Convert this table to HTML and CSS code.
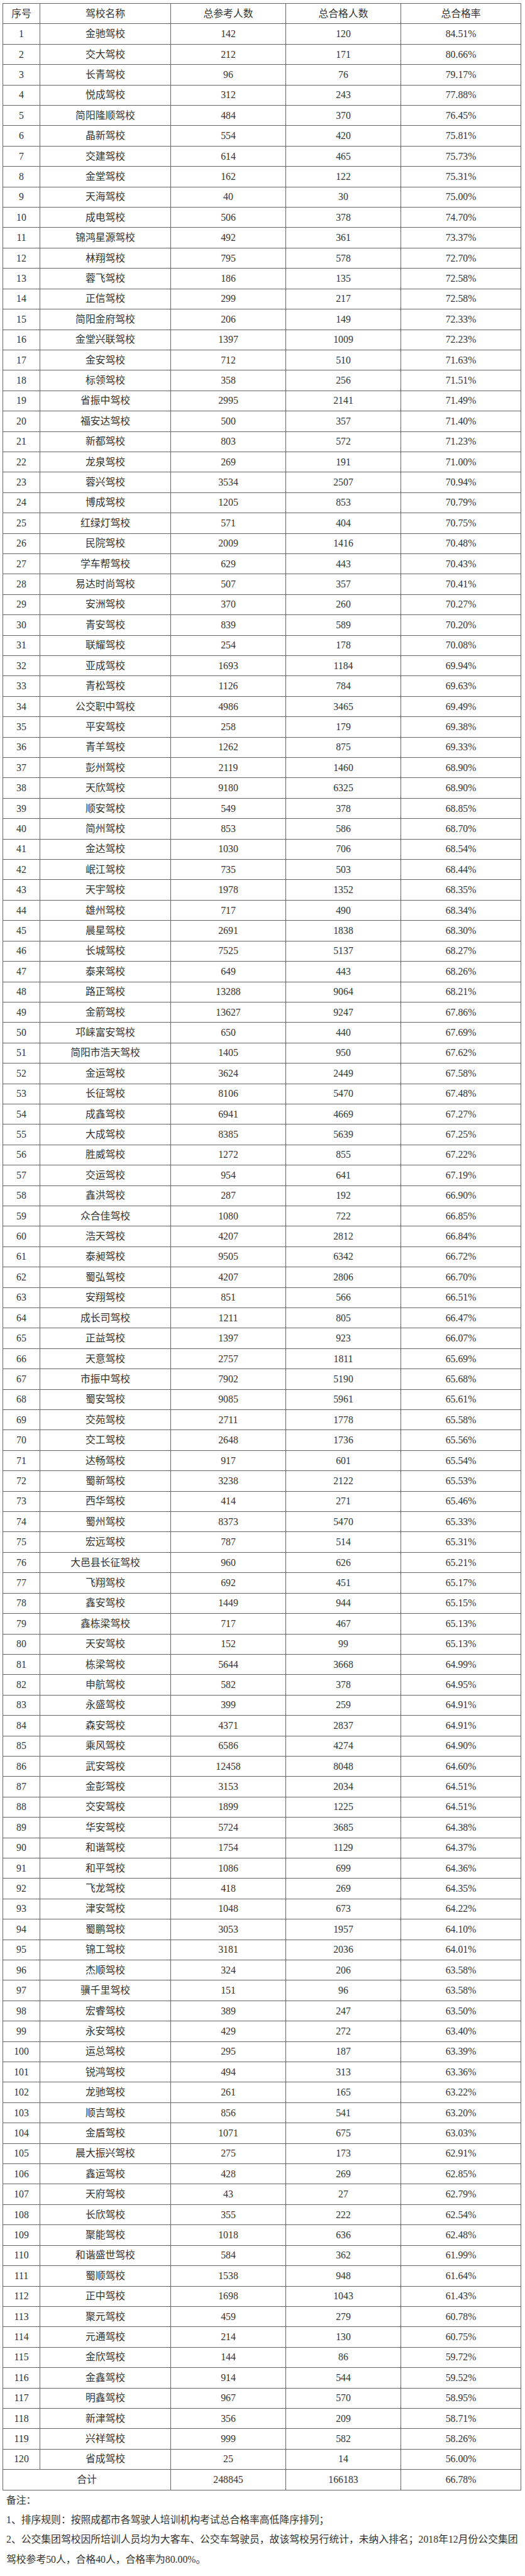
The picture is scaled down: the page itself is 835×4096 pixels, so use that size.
FILE: index.html
```html
<!DOCTYPE html>
<html lang="zh-CN">
<head>
<meta charset="utf-8">
<title>驾校考试合格率排名</title>
<link rel="stylesheet" href="styles.css">
</head>
<body>
<table class="rank">
<colgroup><col class="c-no"><col class="c-name"><col class="c-num"><col class="c-num"><col class="c-rate"></colgroup>
<thead>
<tr><th>序号</th><th>驾校名称</th><th>总参考人数</th><th>总合格人数</th><th>总合格率</th></tr>
</thead>
<tbody>
<tr><td>1</td><td>金驰驾校</td><td>142</td><td>120</td><td>84.51%</td></tr>
<tr><td>2</td><td>交大驾校</td><td>212</td><td>171</td><td>80.66%</td></tr>
<tr><td>3</td><td>长青驾校</td><td>96</td><td>76</td><td>79.17%</td></tr>
<tr><td>4</td><td>悦成驾校</td><td>312</td><td>243</td><td>77.88%</td></tr>
<tr><td>5</td><td>简阳隆顺驾校</td><td>484</td><td>370</td><td>76.45%</td></tr>
<tr><td>6</td><td>晶新驾校</td><td>554</td><td>420</td><td>75.81%</td></tr>
<tr><td>7</td><td>交建驾校</td><td>614</td><td>465</td><td>75.73%</td></tr>
<tr><td>8</td><td>金堂驾校</td><td>162</td><td>122</td><td>75.31%</td></tr>
<tr><td>9</td><td>天海驾校</td><td>40</td><td>30</td><td>75.00%</td></tr>
<tr><td>10</td><td>成电驾校</td><td>506</td><td>378</td><td>74.70%</td></tr>
<tr><td>11</td><td>锦鸿星源驾校</td><td>492</td><td>361</td><td>73.37%</td></tr>
<tr><td>12</td><td>林翔驾校</td><td>795</td><td>578</td><td>72.70%</td></tr>
<tr><td>13</td><td>蓉飞驾校</td><td>186</td><td>135</td><td>72.58%</td></tr>
<tr><td>14</td><td>正信驾校</td><td>299</td><td>217</td><td>72.58%</td></tr>
<tr><td>15</td><td>简阳金府驾校</td><td>206</td><td>149</td><td>72.33%</td></tr>
<tr><td>16</td><td>金堂兴联驾校</td><td>1397</td><td>1009</td><td>72.23%</td></tr>
<tr><td>17</td><td>金安驾校</td><td>712</td><td>510</td><td>71.63%</td></tr>
<tr><td>18</td><td>标领驾校</td><td>358</td><td>256</td><td>71.51%</td></tr>
<tr><td>19</td><td>省振中驾校</td><td>2995</td><td>2141</td><td>71.49%</td></tr>
<tr><td>20</td><td>福安达驾校</td><td>500</td><td>357</td><td>71.40%</td></tr>
<tr><td>21</td><td>新都驾校</td><td>803</td><td>572</td><td>71.23%</td></tr>
<tr><td>22</td><td>龙泉驾校</td><td>269</td><td>191</td><td>71.00%</td></tr>
<tr><td>23</td><td>蓉兴驾校</td><td>3534</td><td>2507</td><td>70.94%</td></tr>
<tr><td>24</td><td>博成驾校</td><td>1205</td><td>853</td><td>70.79%</td></tr>
<tr><td>25</td><td>红绿灯驾校</td><td>571</td><td>404</td><td>70.75%</td></tr>
<tr><td>26</td><td>民院驾校</td><td>2009</td><td>1416</td><td>70.48%</td></tr>
<tr><td>27</td><td>学车帮驾校</td><td>629</td><td>443</td><td>70.43%</td></tr>
<tr><td>28</td><td>易达时尚驾校</td><td>507</td><td>357</td><td>70.41%</td></tr>
<tr><td>29</td><td>安洲驾校</td><td>370</td><td>260</td><td>70.27%</td></tr>
<tr><td>30</td><td>青安驾校</td><td>839</td><td>589</td><td>70.20%</td></tr>
<tr><td>31</td><td>联耀驾校</td><td>254</td><td>178</td><td>70.08%</td></tr>
<tr><td>32</td><td>亚成驾校</td><td>1693</td><td>1184</td><td>69.94%</td></tr>
<tr><td>33</td><td>青松驾校</td><td>1126</td><td>784</td><td>69.63%</td></tr>
<tr><td>34</td><td>公交职中驾校</td><td>4986</td><td>3465</td><td>69.49%</td></tr>
<tr><td>35</td><td>平安驾校</td><td>258</td><td>179</td><td>69.38%</td></tr>
<tr><td>36</td><td>青羊驾校</td><td>1262</td><td>875</td><td>69.33%</td></tr>
<tr><td>37</td><td>彭州驾校</td><td>2119</td><td>1460</td><td>68.90%</td></tr>
<tr><td>38</td><td>天欣驾校</td><td>9180</td><td>6325</td><td>68.90%</td></tr>
<tr><td>39</td><td>顺安驾校</td><td>549</td><td>378</td><td>68.85%</td></tr>
<tr><td>40</td><td>简州驾校</td><td>853</td><td>586</td><td>68.70%</td></tr>
<tr><td>41</td><td>金达驾校</td><td>1030</td><td>706</td><td>68.54%</td></tr>
<tr><td>42</td><td>岷江驾校</td><td>735</td><td>503</td><td>68.44%</td></tr>
<tr><td>43</td><td>天宇驾校</td><td>1978</td><td>1352</td><td>68.35%</td></tr>
<tr><td>44</td><td>雄州驾校</td><td>717</td><td>490</td><td>68.34%</td></tr>
<tr><td>45</td><td>晨星驾校</td><td>2691</td><td>1838</td><td>68.30%</td></tr>
<tr><td>46</td><td>长城驾校</td><td>7525</td><td>5137</td><td>68.27%</td></tr>
<tr><td>47</td><td>泰来驾校</td><td>649</td><td>443</td><td>68.26%</td></tr>
<tr><td>48</td><td>路正驾校</td><td>13288</td><td>9064</td><td>68.21%</td></tr>
<tr><td>49</td><td>金箭驾校</td><td>13627</td><td>9247</td><td>67.86%</td></tr>
<tr><td>50</td><td>邛崃富安驾校</td><td>650</td><td>440</td><td>67.69%</td></tr>
<tr><td>51</td><td>简阳市浩天驾校</td><td>1405</td><td>950</td><td>67.62%</td></tr>
<tr><td>52</td><td>金运驾校</td><td>3624</td><td>2449</td><td>67.58%</td></tr>
<tr><td>53</td><td>长征驾校</td><td>8106</td><td>5470</td><td>67.48%</td></tr>
<tr><td>54</td><td>成鑫驾校</td><td>6941</td><td>4669</td><td>67.27%</td></tr>
<tr><td>55</td><td>大成驾校</td><td>8385</td><td>5639</td><td>67.25%</td></tr>
<tr><td>56</td><td>胜威驾校</td><td>1272</td><td>855</td><td>67.22%</td></tr>
<tr><td>57</td><td>交运驾校</td><td>954</td><td>641</td><td>67.19%</td></tr>
<tr><td>58</td><td>鑫洪驾校</td><td>287</td><td>192</td><td>66.90%</td></tr>
<tr><td>59</td><td>众合佳驾校</td><td>1080</td><td>722</td><td>66.85%</td></tr>
<tr><td>60</td><td>浩天驾校</td><td>4207</td><td>2812</td><td>66.84%</td></tr>
<tr><td>61</td><td>泰昶驾校</td><td>9505</td><td>6342</td><td>66.72%</td></tr>
<tr><td>62</td><td>蜀弘驾校</td><td>4207</td><td>2806</td><td>66.70%</td></tr>
<tr><td>63</td><td>安翔驾校</td><td>851</td><td>566</td><td>66.51%</td></tr>
<tr><td>64</td><td>成长司驾校</td><td>1211</td><td>805</td><td>66.47%</td></tr>
<tr><td>65</td><td>正益驾校</td><td>1397</td><td>923</td><td>66.07%</td></tr>
<tr><td>66</td><td>天意驾校</td><td>2757</td><td>1811</td><td>65.69%</td></tr>
<tr><td>67</td><td>市振中驾校</td><td>7902</td><td>5190</td><td>65.68%</td></tr>
<tr><td>68</td><td>蜀安驾校</td><td>9085</td><td>5961</td><td>65.61%</td></tr>
<tr><td>69</td><td>交苑驾校</td><td>2711</td><td>1778</td><td>65.58%</td></tr>
<tr><td>70</td><td>交工驾校</td><td>2648</td><td>1736</td><td>65.56%</td></tr>
<tr><td>71</td><td>达畅驾校</td><td>917</td><td>601</td><td>65.54%</td></tr>
<tr><td>72</td><td>蜀新驾校</td><td>3238</td><td>2122</td><td>65.53%</td></tr>
<tr><td>73</td><td>西华驾校</td><td>414</td><td>271</td><td>65.46%</td></tr>
<tr><td>74</td><td>蜀州驾校</td><td>8373</td><td>5470</td><td>65.33%</td></tr>
<tr><td>75</td><td>宏远驾校</td><td>787</td><td>514</td><td>65.31%</td></tr>
<tr><td>76</td><td>大邑县长征驾校</td><td>960</td><td>626</td><td>65.21%</td></tr>
<tr><td>77</td><td>飞翔驾校</td><td>692</td><td>451</td><td>65.17%</td></tr>
<tr><td>78</td><td>鑫安驾校</td><td>1449</td><td>944</td><td>65.15%</td></tr>
<tr><td>79</td><td>鑫栋梁驾校</td><td>717</td><td>467</td><td>65.13%</td></tr>
<tr><td>80</td><td>天安驾校</td><td>152</td><td>99</td><td>65.13%</td></tr>
<tr><td>81</td><td>栋梁驾校</td><td>5644</td><td>3668</td><td>64.99%</td></tr>
<tr><td>82</td><td>申航驾校</td><td>582</td><td>378</td><td>64.95%</td></tr>
<tr><td>83</td><td>永盛驾校</td><td>399</td><td>259</td><td>64.91%</td></tr>
<tr><td>84</td><td>森安驾校</td><td>4371</td><td>2837</td><td>64.91%</td></tr>
<tr><td>85</td><td>乘风驾校</td><td>6586</td><td>4274</td><td>64.90%</td></tr>
<tr><td>86</td><td>武安驾校</td><td>12458</td><td>8048</td><td>64.60%</td></tr>
<tr><td>87</td><td>金彭驾校</td><td>3153</td><td>2034</td><td>64.51%</td></tr>
<tr><td>88</td><td>交安驾校</td><td>1899</td><td>1225</td><td>64.51%</td></tr>
<tr><td>89</td><td>华安驾校</td><td>5724</td><td>3685</td><td>64.38%</td></tr>
<tr><td>90</td><td>和谐驾校</td><td>1754</td><td>1129</td><td>64.37%</td></tr>
<tr><td>91</td><td>和平驾校</td><td>1086</td><td>699</td><td>64.36%</td></tr>
<tr><td>92</td><td>飞龙驾校</td><td>418</td><td>269</td><td>64.35%</td></tr>
<tr><td>93</td><td>津安驾校</td><td>1048</td><td>673</td><td>64.22%</td></tr>
<tr><td>94</td><td>蜀鹏驾校</td><td>3053</td><td>1957</td><td>64.10%</td></tr>
<tr><td>95</td><td>锦工驾校</td><td>3181</td><td>2036</td><td>64.01%</td></tr>
<tr><td>96</td><td>杰顺驾校</td><td>324</td><td>206</td><td>63.58%</td></tr>
<tr><td>97</td><td>骥千里驾校</td><td>151</td><td>96</td><td>63.58%</td></tr>
<tr><td>98</td><td>宏睿驾校</td><td>389</td><td>247</td><td>63.50%</td></tr>
<tr><td>99</td><td>永安驾校</td><td>429</td><td>272</td><td>63.40%</td></tr>
<tr><td>100</td><td>运总驾校</td><td>295</td><td>187</td><td>63.39%</td></tr>
<tr><td>101</td><td>锐鸿驾校</td><td>494</td><td>313</td><td>63.36%</td></tr>
<tr><td>102</td><td>龙驰驾校</td><td>261</td><td>165</td><td>63.22%</td></tr>
<tr><td>103</td><td>顺吉驾校</td><td>856</td><td>541</td><td>63.20%</td></tr>
<tr><td>104</td><td>金盾驾校</td><td>1071</td><td>675</td><td>63.03%</td></tr>
<tr><td>105</td><td>晨大振兴驾校</td><td>275</td><td>173</td><td>62.91%</td></tr>
<tr><td>106</td><td>鑫运驾校</td><td>428</td><td>269</td><td>62.85%</td></tr>
<tr><td>107</td><td>天府驾校</td><td>43</td><td>27</td><td>62.79%</td></tr>
<tr><td>108</td><td>长欣驾校</td><td>355</td><td>222</td><td>62.54%</td></tr>
<tr><td>109</td><td>聚能驾校</td><td>1018</td><td>636</td><td>62.48%</td></tr>
<tr><td>110</td><td>和谐盛世驾校</td><td>584</td><td>362</td><td>61.99%</td></tr>
<tr><td>111</td><td>蜀顺驾校</td><td>1538</td><td>948</td><td>61.64%</td></tr>
<tr><td>112</td><td>正中驾校</td><td>1698</td><td>1043</td><td>61.43%</td></tr>
<tr><td>113</td><td>聚元驾校</td><td>459</td><td>279</td><td>60.78%</td></tr>
<tr><td>114</td><td>元通驾校</td><td>214</td><td>130</td><td>60.75%</td></tr>
<tr><td>115</td><td>金欣驾校</td><td>144</td><td>86</td><td>59.72%</td></tr>
<tr><td>116</td><td>金鑫驾校</td><td>914</td><td>544</td><td>59.52%</td></tr>
<tr><td>117</td><td>明鑫驾校</td><td>967</td><td>570</td><td>58.95%</td></tr>
<tr><td>118</td><td>新津驾校</td><td>356</td><td>209</td><td>58.71%</td></tr>
<tr><td>119</td><td>兴祥驾校</td><td>999</td><td>582</td><td>58.26%</td></tr>
<tr><td>120</td><td>省成驾校</td><td>25</td><td>14</td><td>56.00%</td></tr>
<tr><td colspan="2">合计</td><td>248845</td><td>166183</td><td>66.78%</td></tr>
</tbody>
</table>
<div class="notes">
<p>备注：</p>
<p>1、排序规则：按照成都市各驾驶人培训机构考试总合格率高低降序排列；</p>
<p>2、公交集团驾校因所培训人员均为大客车、公交车驾驶员，故该驾校另行统计，未纳入排名；2018年12月份公交集团驾校参考50人，合格40人，合格率为80.00%。</p>
</div>
</body>
</html>
```

FILE: styles.css
```css
html, body {
  margin: 0;
  background: #ffffff;
}

body {
  padding: 5px 0 0 4px;
  color: #333333;
  font-family: "Liberation Serif", "Noto Sans CJK SC", serif;
  font-size: 15.8px;
}

.rank {
  border-collapse: collapse;
  table-layout: fixed;
  width: 824px;
}

.c-no { width: 59px; }
.c-name { width: 208px; }
.c-num { width: 183px; }
.c-rate { width: 191px; }

.rank tr {
  height: 32.41px;
}

.rank th,
.rank td {
  border: 1px solid #666666;
  padding: 0;
  text-align: center;
  vertical-align: middle;
  font-weight: normal;
  line-height: 20px;
}

.notes {
  padding-left: 6px;
  line-height: 31.4px;
}

.notes p {
  margin: 0;
}
```
